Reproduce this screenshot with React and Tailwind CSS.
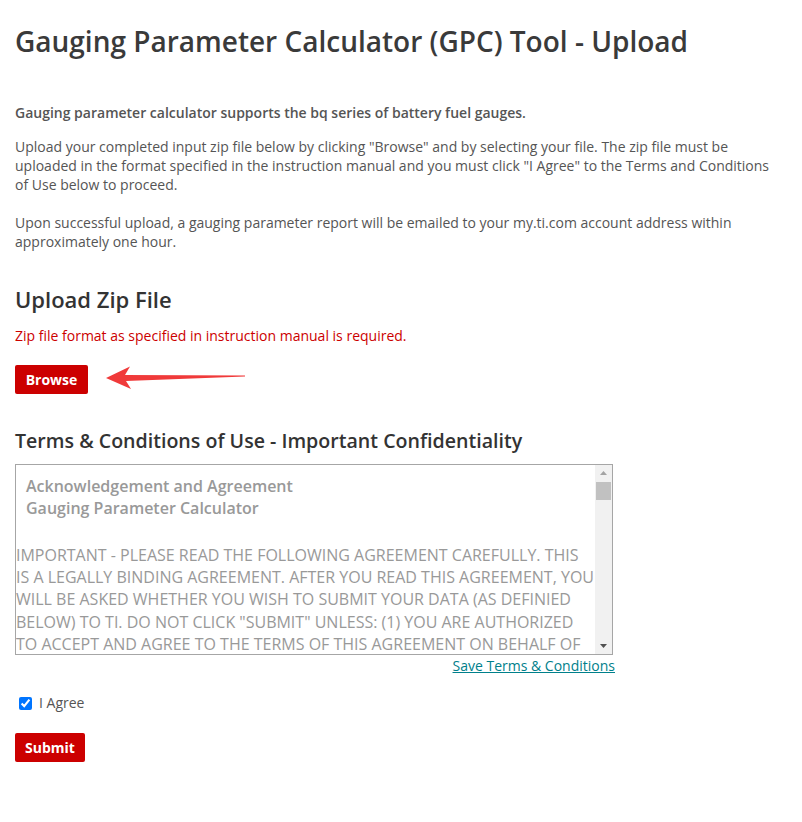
import React from "react";

const lines = [
  "IMPORTANT - PLEASE READ THE FOLLOWING AGREEMENT CAREFULLY. THIS",
  "IS A LEGALLY BINDING AGREEMENT. AFTER YOU READ THIS AGREEMENT, YOU",
  "WILL BE ASKED WHETHER YOU WISH TO SUBMIT YOUR DATA (AS DEFINIED",
  "BELOW) TO TI. DO NOT CLICK \"SUBMIT\" UNLESS: (1) YOU ARE AUTHORIZED",
  "TO ACCEPT AND AGREE TO THE TERMS OF THIS AGREEMENT ON BEHALF OF",
];

export default function App() {
  return (
    <div className="min-h-[822px] bg-white px-[15px] font-['Open_Sans',sans-serif] text-[14px] text-[#555]">
      <h1 className="pt-[24px] text-[28px] font-semibold leading-[34px] text-[#3a3a3a]">
        Gauging Parameter Calculator (GPC) Tool - Upload
      </h1>
      <p className="mt-[45px] font-semibold leading-[20px] text-[#555]">
        Gauging parameter calculator supports the bq series of battery fuel gauges.
      </p>
      <p className="mt-[14px] leading-[19px]">
        Upload your completed input zip file below by clicking "Browse" and by selecting your file. The zip file must be
        <br />
        uploaded in the format specified in the instruction manual and you must click "I Agree" to the Terms and Conditions
        <br />
        of Use below to proceed.
      </p>
      <p className="mt-[19px] leading-[19px]">
        Upon successful upload, a gauging parameter report will be emailed to your my.ti.com account address within
        <br />
        approximately one hour.
      </p>

      <h2 className="mt-[35px] text-[22px] font-semibold leading-[26px] text-[#333]">Upload Zip File</h2>
      <p className="mt-[14px] leading-[20px] text-[#cc0000]">
        Zip file format as specified in instruction manual is required.
      </p>
      <div className="mt-[18px] flex items-center">
        <button className="h-[29px] w-[73px] rounded-[2px] bg-[#cc0000] text-[14px] font-bold text-white">
          Browse
        </button>
        <svg width="142" height="30" viewBox="0 0 142 30" className="ml-[17px]">
          <polygon
            points="1,14 25,2.5 20,11 140,11.5 140,12.5 21,17 26,25"
            fill="#f03a3a"
          />
        </svg>
      </div>

      <h2 className="mt-[35px] text-[19.6px] font-semibold leading-[24px] text-[#333]">
        Terms &amp; Conditions of Use - Important Confidentiality
      </h2>
      <div className="w-[600px]">
        <div className="relative mt-[11px] h-[191px] w-[598px] overflow-hidden border border-[#a6a6a6] bg-white text-[16px] text-[#999]">
          <div className="pl-[10px] pt-[10px] font-semibold leading-[22px]">
            <div>Acknowledgement and Agreement</div>
            <div>Gauging Parameter Calculator</div>
          </div>
          <div className="mt-[25px] leading-[22.2px]">
            {lines.map((l) => (
              <div key={l} className="whitespace-nowrap">
                {l}
              </div>
            ))}
          </div>
          <div className="absolute right-0 top-0 flex h-full w-[17px] flex-col items-center bg-[#f1f1f1]">
            <svg width="17" height="17" viewBox="0 0 17 17">
              <polygon points="5,10 12,10 8.5,6" fill="#a3a3a3" />
            </svg>
            <div className="h-[18px] w-[15px] bg-[#c1c1c1]" />
            <div className="flex-1" />
            <svg width="17" height="17" viewBox="0 0 17 17">
              <polygon points="5,7 12,7 8.5,11" fill="#505050" />
            </svg>
          </div>
        </div>
        <div className="mt-[1px] text-right leading-[20px]">
          <a href="#" className="text-[#00808b] underline">
            Save Terms &amp; Conditions
          </a>
        </div>
      </div>

      <label className="mt-[17px] flex items-center leading-[20px]">
        <input type="checkbox" defaultChecked className="ml-[4px] h-[13px] w-[13px] accent-[#0075ff]" />
        <span className="ml-[7px] text-[#555]">I Agree</span>
      </label>
      <button className="mt-[20px] h-[29px] w-[70px] rounded-[2px] bg-[#cc0000] text-[14px] font-bold text-white">
        Submit
      </button>
    </div>
  );
}
